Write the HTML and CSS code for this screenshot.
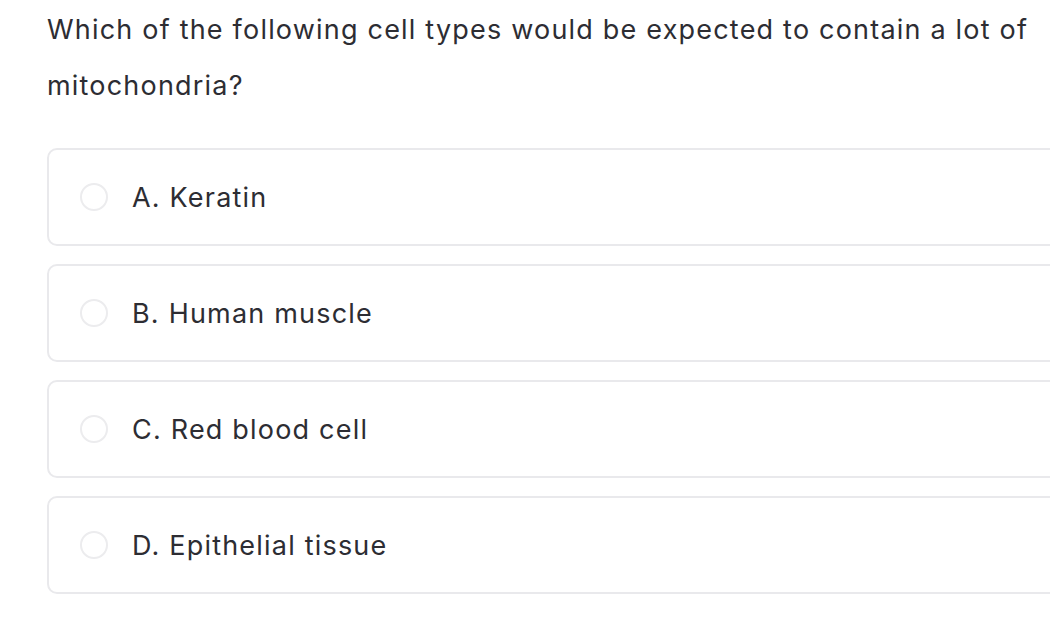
FILE: index.html
```html
<!DOCTYPE html>
<html lang="en">
<head>
<meta charset="utf-8">
<title>Question</title>
<link rel="stylesheet" href="styles.css">
</head>
<body>
<main class="quiz">
  <p class="question">Which of the following cell types would be expected to contain a lot of mitochondria?</p>
  <div class="options">
    <label class="option"><span class="radio"></span><span class="opt-text">A. Keratin</span></label>
    <label class="option"><span class="radio"></span><span class="opt-text">B. Human muscle</span></label>
    <label class="option"><span class="radio"></span><span class="opt-text">C. Red blood cell</span></label>
    <label class="option"><span class="radio"></span><span class="opt-text">D. Epithelial tissue</span></label>
  </div>
</main>
</body>
</html>
```
FILE: styles.css
```css
html, body {
  margin: 0;
  padding: 0;
  background: #ffffff;
  overflow: hidden;
}
body {
  font-family: "Inter", "Liberation Sans", sans-serif;
  color: #2d2d33;
  letter-spacing: 1.2px;
}
.quiz {
  padding: 2px 0 0 47px;
  width: 1060px;
}
.question {
  margin: 0;
  width: 1000px;
  font-size: 27px;
  line-height: 56px;
}
.options {
  margin-top: 34px;
  display: flex;
  flex-direction: column;
  gap: 18px;
}
.option {
  box-sizing: border-box;
  height: 98px;
  border: 2px solid #e9e9ec;
  border-radius: 10px;
  display: flex;
  align-items: center;
  padding-left: 31px;
}
.radio {
  box-sizing: border-box;
  width: 28px;
  height: 28px;
  border: 2px solid #ececee;
  border-radius: 50%;
  flex: none;
}
.opt-text {
  margin-left: 24px;
  font-size: 27px;
}
```
